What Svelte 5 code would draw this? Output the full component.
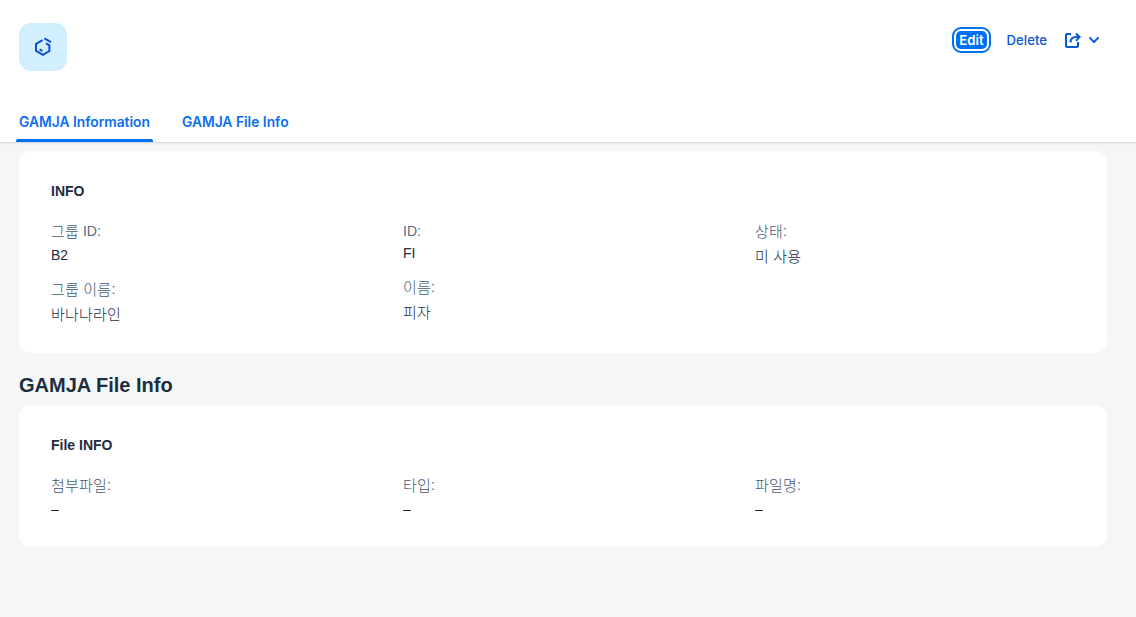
<script>
  const infoColumns = [
    [
      { label: "그룹 ID:", value: "B2" },
      { label: "그룹 이름:", value: "바나나라인" },
    ],
    [
      { label: "ID:", value: "FI" },
      { label: "이름:", value: "피자" },
    ],
    [{ label: "상태:", value: "미 사용" }],
  ];

  const fileColumns = [
    [{ label: "첨부파일:", value: "–" }],
    [{ label: "타입:", value: "–" }],
    [{ label: "파일명:", value: "–" }],
  ];

  // hangul runs get their own span, the fallback font is narrower than the reference
  const splitHangul = (text) => text.split(/([\uac00-\ud7a3]+(?: [\uac00-\ud7a3]+)*)/);
</script>

{#snippet mixed(text)}
  {#each splitHangul(text) as part, i}{#if i % 2}<span class="hangul">{part}</span>{:else}{part}{/if}{/each}
{/snippet}

{#snippet fields(columns)}
  <div class="grid">
    {#each columns as column}
      <div class="column">
        {#each column as field}
          <div class="field">
            <div class="label">{@render mixed(field.label)}</div>
            <div class="value">{@render mixed(field.value)}</div>
          </div>
        {/each}
      </div>
    {/each}
  </div>
{/snippet}

<div class="page">
  <header class="header">
    <div class="title-row">
      <div class="avatar">
        <svg width="20" height="20" viewBox="0 0 20 20" fill="none" stroke="#0a4fd0" stroke-width="2">
          <path d="M9.5 3.2 3 7v6.8l7 4 6.4-3.8V8.4L13 6.4" />
          <path d="M11.4 1.4 18 5.2" />
          <path d="M6.6 12.4l2.8 1.6" />
        </svg>
      </div>
      <div class="actions">
        <button class="btn emphasized">Edit</button>
        <button class="btn">Delete</button>
        <button class="btn share" aria-label="Share">
          <svg width="18" height="18" viewBox="0 0 18 18" fill="none" stroke="#0a5ad6" stroke-width="2">
            <path d="M8 3H4a1 1 0 0 0-1 1v11a1 1 0 0 0 1 1h10a1 1 0 0 0 1-1v-4" />
            <path d="M7.5 11.5c0-3.4 2-5.4 5-5.4h4" />
            <path d="M13 2.5l3.6 3.6L13 9.7" />
          </svg>
          <svg width="12" height="8" viewBox="0 0 12 8" fill="none" stroke="#0a5ad6" stroke-width="2">
            <path d="M1.4 1.4 6 6l4.6-4.6" />
          </svg>
        </button>
      </div>
    </div>
    <nav class="tabs">
      <span class="tab active">GAMJA Information</span>
      <span class="tab">GAMJA File Info</span>
    </nav>
  </header>

  <main class="content">
    <section class="card info">
      <h3>INFO</h3>
      {@render fields(infoColumns)}
    </section>

    <h2>GAMJA File Info</h2>

    <section class="card file">
      <h3>File INFO</h3>
      {@render fields(fileColumns)}
    </section>
  </main>
</div>

<style>
  :global(body) {
    background: #f5f6f7;
    font-family: "Liberation Sans", "Noto Sans CJK KR", sans-serif;
  }

  .page {
    height: 617px;
    overflow: hidden;
  }

  .header {
    background: #fff;
    height: 143px;
    box-sizing: border-box;
    padding: 23px 36px 0 19px;
    display: flex;
    flex-direction: column;
    justify-content: space-between;
    border-bottom: 1px solid #d9dbe0;
    box-shadow: 0 1px 2px rgba(0, 0, 0, 0.05);
  }

  .title-row {
    display: flex;
    justify-content: space-between;
    align-items: flex-start;
  }

  .avatar {
    width: 48px;
    height: 48px;
    border-radius: 12px;
    background: #d1efff;
    display: flex;
    align-items: center;
    justify-content: center;
  }

  .actions {
    display: flex;
    align-items: center;
    gap: 16px;
    margin-top: 8px;
  }

  .btn {
    border: 0;
    background: none;
    padding: 0;
    font: 500 13.2px Inter, sans-serif;
    color: #0a5ad6;
    display: flex;
    align-items: center;
  }

  .emphasized {
    color: #fff;
    background: #0070f2;
    border-radius: 5px;
    height: 18px;
    padding: 0 3px;
    outline: 2px solid #0070f2;
    outline-offset: 2px;
    font-weight: 600;
    margin: 0 4px;
  }

  .share {
    gap: 7px;
  }

  .tabs {
    display: flex;
    gap: 32px;
  }

  .tab {
    font: 600 13.8px Inter, sans-serif;
    color: #0a6ef2;
    padding-bottom: 10px;
    line-height: 19px;
    position: relative;
  }

  .active::after {
    content: "";
    position: absolute;
    left: -3px;
    right: -3px;
    bottom: 0;
    height: 3px;
    background: #0070f2;
    border-radius: 2px 2px 0 0;
  }

  .content {
    padding: 8px 29px 0 19px;
  }

  .card {
    background: #fff;
    border-radius: 12px;
    padding: 32px 32px 0;
    box-sizing: border-box;
  }

  .info {
    height: 202px;
  }

  .file {
    height: 142px;
  }

  h3 {
    margin: 0 0 24px;
    font: 700 14px/16px "Liberation Sans", sans-serif;
    color: #1d2d3e;
  }

  h2 {
    margin: 20px 0 8px;
    font: 700 20px/24px "Liberation Sans", sans-serif;
    color: #1d2d3e;
  }

  .grid {
    display: grid;
    grid-template-columns: repeat(3, 352px);
  }

  .column {
    display: flex;
    flex-direction: column;
    gap: 18px;
  }

  .label {
    font-size: 14px;
    line-height: 16px;
    color: #556b82;
    margin-bottom: 6px;
  }

  .value {
    font-size: 14px;
    line-height: 16px;
    color: #1d2d3e;
  }

  .hangul {
    font-size: 15px;
    line-height: 18px;
    letter-spacing: 0.2px;
    font-weight: 300;
    vertical-align: -1px;
  }

  .label .hangul {
    color: #46596e;
  }

  .value .hangul {
    vertical-align: -2px;
  }
</style>
